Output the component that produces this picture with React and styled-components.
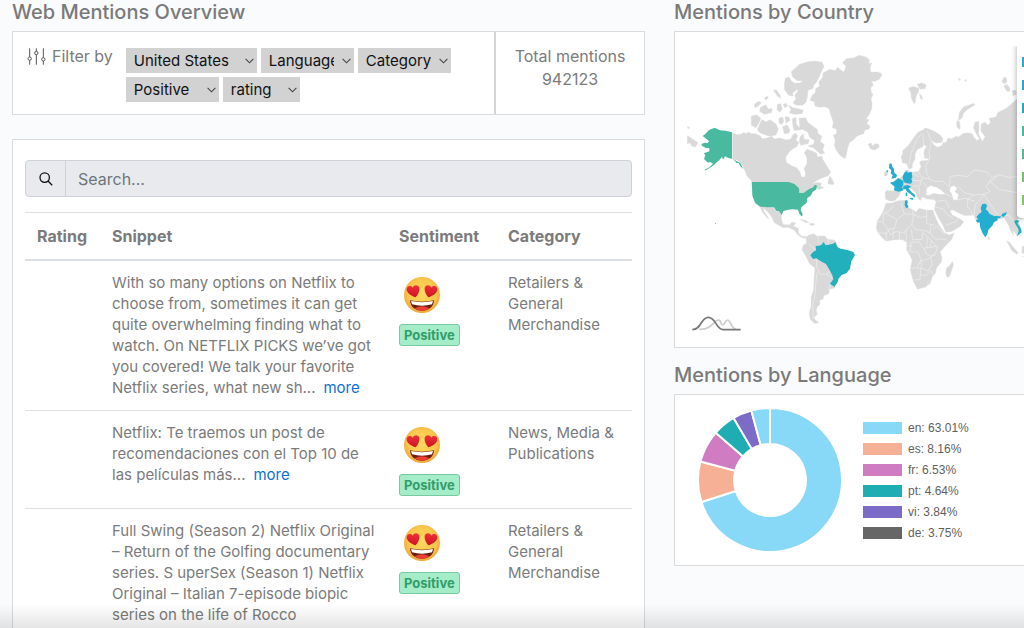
import React from "react";
import styled, { createGlobalStyle } from "styled-components";

const GlobalStyle = createGlobalStyle`
  *, *::before, *::after { box-sizing: border-box; }
  html, body { margin: 0; }
  body {
    height: 100vh;
    overflow: hidden;
    background: #fafbfd;
    color: #7b7b7b;
    font-family: Inter, "Open Sans", sans-serif;
    font-size: 15px;
    line-height: 21px;
  }
`;

const Page = styled.main`
  display: grid;
  grid-template-columns: minmax(0, 633fr) minmax(0, 350fr);
  gap: 29px;
  padding-left: 12px;
`;

const BottomShade = styled.div`
  position: fixed;
  right: 0;
  bottom: 0;
  left: 0;
  height: 24px;
  background: linear-gradient(rgba(0, 0, 0, 0), rgba(0, 0, 0, 0.1));
  pointer-events: none;
`;

const Column = styled.div`
  display: flex;
  flex-direction: column;
`;

const Heading = styled.h2`
  margin: 0;
  padding-top: ${(p) => (p.$spaced ? "15px" : "0")};
  padding-bottom: 7px;
  font-size: 20px;
  font-weight: 500;
  line-height: 24px;
  color: #7a7a7a;
`;

const Card = styled.section`
  background: #fff;
  border: 1px solid #d9dbdc;
`;

const SideCard = styled(Card)`
  position: relative;
  border-right: 0;
`;

const FilterCard = styled(Card)`
  display: flex;
  margin-bottom: 24px;
`;

const FilterArea = styled.div`
  display: flex;
  flex: 1;
  gap: 13px;
  padding: 16px 14px 12px;
`;

const FilterLabel = styled.div`
  display: flex;
  gap: 6px;
  height: 16px;
  align-items: center;
  white-space: nowrap;
  font-size: 16px;
`;

const Filters = styled.div`
  display: flex;
  flex: 1;
  flex-wrap: wrap;
  gap: 4px;
  align-content: flex-start;
  max-width: 340px;
`;

const SelectWrap = styled.span`
  position: relative;
  width: ${(p) => p.$width}px;
  svg {
    position: absolute;
    right: 3px;
    top: 10px;
    pointer-events: none;
  }
`;

const Select = styled.select`
  appearance: none;
  display: block;
  width: 100%;
  height: 25px;
  padding: 0 20px 0 8px;
  border: 0;
  border-radius: 0;
  background: #d2d2d2;
  color: #111;
  font: 400 15px/25px Inter, "Open Sans", sans-serif;
  text-overflow: clip;
`;

const Totals = styled.div`
  width: 150px;
  padding: 13px 8px;
  border-left: 2px solid #d3d5d6;
  text-align: center;
  font-size: 16px;
  line-height: 23px;
`;

const TableCard = styled(Card)`
  padding: 20px 12px 0;
`;

const SearchBar = styled.form`
  display: flex;
  height: 37px;
  margin-bottom: 15px;
  overflow: hidden;
  border: 1px solid #ced2d8;
  border-radius: 4px;
  background: #e8eaed;
`;

const SearchButton = styled.button`
  display: flex;
  align-items: center;
  justify-content: center;
  width: 40px;
  padding: 0;
  border: 0;
  border-right: 1px solid #ced2d8;
  background: transparent;
`;

const SearchInput = styled.input`
  flex: 1;
  min-width: 0;
  padding: 0 12px;
  border: 0;
  outline: 0;
  background: transparent;
  font: 400 16px/24px Inter, "Open Sans", sans-serif;
  &::placeholder { color: #6f757b; opacity: 1; }
`;

const Table = styled.table`
  width: 100%;
  table-layout: fixed;
  border-collapse: separate;
  border-spacing: 0;
`;

const Th = styled.th`
  width: ${(p) => p.$width || "auto"};
  height: 49px;
  padding: 0 12px;
  border-top: 1px solid #dee2e6;
  border-bottom: 2px solid #dcdfe1;
  text-align: left;
  font-size: 16px;
  font-weight: 700;
`;

const Td = styled.td`
  padding: 11px 0 12px 12px;
  border-bottom: 1px solid #dee2e6;
  vertical-align: top;
  white-space: nowrap;
`;

const MoreLink = styled.a`
  margin-left: 8px;
  color: #0d6fd6;
  text-decoration: none;
`;

const Mood = styled.div`
  display: flex;
  flex-direction: column;
  align-items: flex-start;
  gap: 10px;
  padding-top: 4px;
  svg { margin-left: 4px; }
`;

const Badge = styled.span`
  height: 22px;
  padding: 0 4px;
  border: 1px solid #76c9a0;
  border-radius: 3px;
  background: #a5ecc8;
  color: #339d6b;
  font-size: 13px;
  font-weight: 700;
  line-height: 20px;
`;

const MapDrawing = styled.svg`
  display: block;
  width: 100%;
  height: 315px;
`;

const MapLegend = styled.div`
  position: absolute;
  top: 10px;
  right: 0;
  display: flex;
  flex-direction: column;
  gap: 13px;
  width: 7px;
  height: 176px;
  padding: 15px 0 0 5px;
  border-radius: 4px 0 0 4px;
  background: #fff;
  box-shadow: -1px 2px 5px rgba(0, 0, 0, 0.25);
  clip-path: inset(4px 0 -8px -8px);
`;

const LegendTick = styled.i`
  flex: none;
  height: 10px;
  background: ${(p) => p.$color};
`;

const LanguageCard = styled(SideCard)`
  display: flex;
  gap: 20px;
  align-items: center;
  height: 172px;
  padding-left: 23px;
`;

const LanguageList = styled.ul`
  display: flex;
  flex-direction: column;
  gap: 9px;
  margin: 0;
  padding: 0;
  list-style: none;
`;

const LanguageItem = styled.li`
  display: flex;
  gap: 6px;
  align-items: center;
  color: #5f5f5f;
  font: 400 12px/12px "Liberation Sans", Arial, sans-serif;
`;

const Swatch = styled.i`
  width: 39px;
  height: 12px;
  background: ${(p) => p.$color};
`;

const filters = [
  { label: "Country", value: "United States", width: 131 },
  { label: "Language", value: "Language", width: 93 },
  { label: "Category", value: "Category", width: 93 },
  { label: "Sentiment", value: "Positive", width: 93 },
  { label: "Rating", value: "rating", width: 77 },
];

const mentions = [
  {
    snippet: [
      "With so many options on Netflix to",
      "choose from, sometimes it can get",
      "quite overwhelming finding what to",
      "watch. On NETFLIX PICKS we’ve got",
      "you covered! We talk your favorite",
      "Netflix series, what new sh...",
    ],
    more: true,
    category: ["Retailers &", "General", "Merchandise"],
  },
  {
    snippet: [
      "Netflix: Te traemos un post de",
      "recomendaciones con el Top 10 de",
      "las películas más...",
    ],
    more: true,
    category: ["News, Media &", "Publications"],
  },
  {
    snippet: [
      "Full Swing (Season 2) Netflix Original",
      "– Return of the Golfing documentary",
      "series. S uperSex (Season 1) Netflix",
      "Original – Italian 7-episode biopic",
      "series on the life of Rocco",
    ],
    more: false,
    category: ["Retailers &", "General", "Merchandise"],
  },
];

const languages = [
  { code: "en", share: 63.01, color: "#88d8f8", slice: "#88d8f8" },
  { code: "es", share: 8.16, color: "#f5b095", slice: "#f5b095" },
  { code: "fr", share: 6.53, color: "#cf7cc3", slice: "#cf7cc3" },
  { code: "pt", share: 4.64, color: "#1dadb3", slice: "#1dadb3" },
  { code: "vi", share: 3.84, color: "#7c6cc8", slice: "#7c6cc8" },
  { code: "de", share: 3.75, color: "#666666", slice: "#88d8f8" },
];

const tickColors = ["#29a9d4", "#25abca", "#22abb8", "#49b9a0", "#57b994", "#76c074", "#84c667"];

function Lines({ items }) {
  return items.map((line, i) => (
    <React.Fragment key={i}>
      {i > 0 && <br />}
      {line}
    </React.Fragment>
  ));
}

function Chevron() {
  return (
    <svg width="9" height="6" viewBox="0 0 9 6" fill="none" stroke="#444" strokeWidth="1.1" aria-hidden="true">
      <path d="M.6.8 4.5 4.8 8.4.8" />
    </svg>
  );
}

function SlidersIcon() {
  return (
    <svg width="19" height="17" viewBox="0 0 57 51" fill="none" stroke="#555" strokeWidth="3" aria-hidden="true">
      <path d="M8 1V27M8 37V50M28 1V10M28 20V50M49 1V29M49 39V50" />
      <circle cx="8" cy="32" r="5" />
      <circle cx="28" cy="15" r="5" />
      <circle cx="49" cy="34" r="5" />
    </svg>
  );
}

function SearchIcon() {
  return (
    <svg width="14" height="14" viewBox="0 0 14 14" fill="none" stroke="#111" strokeWidth="1.3" aria-hidden="true">
      <circle cx="5.7" cy="5.6" r="4.7" />
      <path d="m9 9 4.2 4.2" />
    </svg>
  );
}

function HeartEyes() {
  return (
    <svg width="38" height="38" viewBox="0 0 114 114" role="img" aria-label="Heart eyes">
      <defs>
        <radialGradient id="face" cx="50%" cy="45%" r="55%">
          <stop offset="0" stopColor="#ffd95e" />
          <stop offset=".7" stopColor="#fbc84c" />
          <stop offset="1" stopColor="#efa53a" />
        </radialGradient>
        <linearGradient id="heart" x1="0" y1="0" x2="0" y2="1">
          <stop offset="0" stopColor="#f0303a" />
          <stop offset="1" stopColor="#cc1424" />
        </linearGradient>
      </defs>
      <circle cx="57" cy="57" r="54" fill="url(#face)" />
      <path d="M38 64C23 59 10 50 11 39c1-9 12-12 18-4 5-10 18-9 20 1 1 10-4 20-11 28Z" fill="url(#heart)" />
      <path d="M76 64c15-5 28-14 27-25-1-9-12-12-18-4-5-10-18-9-20 1-1 10 4 20 11 28Z" fill="url(#heart)" />
      <path d="M21 73q36 8 72 0c-1 20-16 31-36 31S22 93 21 73Z" fill="#6b2012" />
      <path d="M24 75q33 7 66 0l-3 10q-30 8-60 0Z" fill="#fff" />
      <path d="M35 97q22-13 44 0-9 7-22 7t-22-7Z" fill="#ee3d35" />
    </svg>
  );
}

function Donut() {
  const total = languages.reduce((sum, l) => sum + l.share, 0);
  const point = (r, a) => `${75 + r * Math.sin(a)} ${75 - r * Math.cos(a)}`;
  let angle = 0;
  return (
    <svg width="145" height="150" viewBox="3 0 145 150" role="img" aria-label="Mentions by language">
      {languages.map((l) => {
        const start = angle;
        angle += (l.share / total) * Math.PI * 2;
        const large = angle - start > Math.PI ? 1 : 0;
        const d = `M${point(72, start)} A72 72 0 ${large} 1 ${point(72, angle)} L${point(36, angle)} A36 36 0 ${large} 0 ${point(36, start)}Z`;
        return <path key={l.code} d={d} fill={l.slice} stroke="#fff" strokeWidth="2" />;
      })}
    </svg>
  );
}

function WorldMap() {
  return (
    <MapDrawing viewBox="-15 -24 1047 945" preserveAspectRatio="xMinYMin meet" role="img" aria-label="World map of mentions">
      <g fill="#d9d9d9" stroke="#d9d9d9" strokeLinejoin="round">
        {/* North America */}
        <path d="M158 279 172 284 185 282 192 277 198 281 206 276 214 281 225 281 240 287 247 296 262 294 276 289 283 297 300 294 318 300 333 297 338 285 347 279 353 288 348 300 357 308 350 320 338 326 326 338 317 352 319 367 336 378 350 383 360 396 364 410 374 412 377 400 372 386 381 371 381 354 373 338 381 328 396 333 410 340 413 351 425 348 430 361 440 377 452 397 444 408 425 414 408 423 396 433 411 427 424 430 421 440 432 442 417 449 411 444 405 438 385 448 375 455 359 460 356 445 345 432 325 427 216 426 210 417 200 407 197 396 188 378 177 362 158 356Z" />
        <path d="M444 424 449 409 456 417 462 431 457 434 444 431Z" />
        <path d="M22 287 41 299 54 308 46 321 37 319 29 308 22 312Z" />
        <path d="M22 260 30 263 24 266Z" />
        {/* Arctic islands */}
        <path d="M334 95 351 80 358 73 385 65 404 63 427 67 432 80 426 91 415 116 408 129 401 135 400 145 384 151 382 171 378 187 368 196 348 195 339 188 348 176 344 166 354 152 346 143 343 130 360 129 369 122 352 122 338 111Z" />
        <path d="M316 114 328 112 335 124 343 129 349 151 338 159 339 168 326 166 314 150 313 133Z" />
        <path d="M280 150 290 151 300 166 302 175 292 168Z" />
        <path d="M253 175 261 169 266 173 257 180Z" />
        <path d="M223 193 236 184 244 188 234 199 224 203Z" />
        <path d="M242 202 258 195 264 207 277 206 274 218 253 223 239 214Z" />
        <path d="M292 193 302 191 307 207 300 217 291 209Z" />
        <path d="M310 193 319 190 322 199 314 203Z" />
        <path d="M326 195 338 203 358 207 370 211 366 221 344 223 328 218 333 209Z" />
        <path d="M214 228 230 225 243 235 235 252 228 263 214 256Z" />
        <path d="M238 255 246 238 257 246 270 239 288 252 295 267 288 285 268 289 241 279 232 270Z" />
        <path d="M297 235 307 231 312 243 305 254 297 248Z" />
        <path d="M315 230 326 231 330 241 318 250Z" />
        <path d="M308 260 321 255 330 269 327 279 313 281Z" />
        <path d="M337 236 348 232 349 253 360 264 357 235 377 233 384 248 401 260 413 269 413 279 426 290 420 304 433 314 428 329 434 340 422 343 400 323 383 318 401 313 404 302 389 292 383 276 367 268 344 272 339 260Z" />
        <path d="M360 291 370 281 372 298 388 299 384 311 362 316 358 304Z" />
        {/* Greenland and Iceland */}
        <path d="M397 165 406 158 407 146 419 138 416 126 428 112 429 99 450 88 466 92 472 82 485 92 492 96 498 78 487 68 500 56 523 53 537 46 558 51 568 59 566 71 575 69 570 84 573 97 588 96 603 99 605 106 598 118 584 124 574 123 580 136 572 143 574 157 579 163 573 177 576 190 575 207 568 223 558 237 567 239 560 251 570 259 566 268 555 269 551 281 531 288 521 299 509 307 503 323 500 340 495 356 481 347 470 332 463 316 466 301 460 286 470 281 470 267 457 263 460 247 454 229 447 206 435 200 417 202 405 198 403 185 390 181Z" />
        <path d="M564 313 573 309 577 317 586 311 596 312 598 321 585 330 572 327Z" />
      </g>

      <g transform="translate(0 420)" fill="#d9d9d9" stroke="#f0f0f0" strokeWidth="1">
        {/* Central and South America */}
        <path d="M240 80 280 82 290 95 298 94 305 106 305 120 310 133 328 134 336 126 348 128 341 139 355 144 356 160 367 169 380 169 378 176 367 174 354 165 342 151 326 143 309 143 283 129 275 112 264 97 250 84 252 93 267 116 261 114 246 95Z" />
        <path d="M358 117 376 121 389 129 378 128 363 121ZM390 130 400 130 406 133 397 137 388 134Z" />
        <path d="M378 172 387 164 402 161 411 168 434 167 443 177 464 180 470 190 478 220 475 270 464 325 449 328 447 341 432 347 430 357 419 362 421 372 412 381 409 390 412 403 403 412 405 418 417 428 404 431 390 418 387 400 393 378 393 352 400 330 402 294 404 263 388 251 377 229 366 210 369 196 379 190Z" />
        <path d="M385 192 407 210 391 227 404 239M412 165 417 190M445 177 445 193M410 238 410 263 420 282 439 283 451 272M411 278 408 304 405 344 398 377 400 417M440 281 458 295M450 312 447 330" fill="none" strokeWidth="2" />
      </g>

      {/* Europe and Asia */}
      <g transform="translate(510 0)" fill="#d9d9d9" stroke="#f0f0f0" strokeWidth="1">
        <path d="M153 350 158 341 157 332 175 316 190 294 204 276 219 269 226 263 241 268 256 275 272 286 280 297 275 308 258 310 246 303 252 315 262 321 274 317 281 305 287 308 294 293 304 296 319 288 325 291 340 280 356 278 367 281 372 291 380 301 388 296 378 281 370 264 374 247 386 243 388 263 386 282 397 303 405 290 392 273 393 252 406 246 413 255 421 248 417 235 438 230 444 217 468 205 486 190 500 177 540 170 540 533 515 536 501 536 510 557 515 573 502 588 491 573 491 587 480 569 476 557 463 535 445 538 424 555 415 569 406 590 395 561 388 545 376 538 371 526 344 527 327 520 308 510 301 512 307 525 328 535 342 545 332 559 304 575 287 577 278 556 264 532 253 509 254 500 258 485 252 479 230 478 218 470 211 482 202 473 198 461 185 446 174 444 184 454 195 464 193 474 180 461 167 450 154 453 147 468 135 482 120 484 106 478 105 457 110 451 132 452 135 438 120 430 131 426 144 420 155 409 164 402 165 391 173 389 182 397 206 394 213 379 208 370 212 362 232 361 237 357 222 355 220 333 213 323 201 330 195 345 196 356 188 371 187 384 177 388 169 371 157 369Z" />
        <path d="M103 397 111 391 115 400 109 409 102 407Z" />
        <path d="M175 144 189 139 207 144 207 153 199 168 196 188 192 191 184 176 182 158ZM201 133 215 128 229 134 226 146 210 148ZM208 159 216 169 218 180 211 176Z" />
        <path d="M324 242 328 216 341 200 371 190 376 194 354 208 341 219 336 235ZM319 244 327 241 331 254 330 270 320 261Z" />
        <path d="M455 125 461 112 469 112 472 126 464 132ZM461 138 471 132 480 144 480 155 470 154ZM486 151 497 150 500 163 489 168ZM324 115 333 117 328 123ZM342 121 349 118 350 125Z" />
        <path d="M413 590 419 592 419 600 414 600ZM469 602 478 606 491 622 505 639 500 643 485 632ZM516 620 527 615 533 646 515 639ZM512 649 535 647 535 651Z" />
        {/* inland seas */}
        <path d="M228 465 231 444 242 437 251 440 259 442 273 450 286 462 272 463 249 460 238 466ZM302 441 313 437 321 445 314 455 325 463 322 480 310 479 306 462 299 452Z" fill="#fff" />
        <path d="M214 325 221 315 229 319 220 337 223 353 213 352 209 337Z" fill="#fff" />
        <path d="M177 374 184 338 198 303 214 281M218 281 222 319M232 273 244 304 237 335 239 356 227 379 230 399 241 420 255 424 280 424 298 441M205 395 217 414 209 438 190 439M187 399 206 410M217 414 240 417M184 421 215 423M298 441 301 409 325 406 352 410 373 390 407 395 427 412 447 404 476 412 501 410M424 416 408 440 421 454 401 463 370 465 344 458 324 440M402 464 416 485 443 525M404 464 376 494 372 525M371 466 353 477 353 500 371 526M321 480 345 475 375 484M262 484 287 480 298 504M255 500 279 507 288 519 309 536M288 555 319 545 325 533M445 405 421 426 448 448 504 459M445 534 459 525 477 527 491 543 504 548M208 443 209 463M221 426 229 443M281 459 306 471" fill="none" strokeWidth="2" />
      </g>

      {/* Africa */}
      <g transform="translate(510 420)" fill="#d9d9d9" stroke="#f0f0f0" strokeWidth="1">
        <path d="M108 69 123 69 143 62 166 60 176 66 171 80 187 88 198 95 207 85 231 90 249 90 255 107 267 134 284 158 298 164 313 158 306 178 284 200 271 216 276 231 275 246 260 263 257 280 247 291 243 305 227 322 202 328 190 305 180 268 186 240 176 221 169 208 170 187 157 179 131 180 108 184 97 174 84 158 78 145 82 122 95 102 103 83Z" />
        <path d="M289 264 300 255 307 244 311 255 299 289 292 293 287 283Z" />
        <path d="M107 99 140 119 163 102 153 70M79 126 99 125 101 99 120 91 132 76M99 127 117 153 105 161 84 157M163 102 190 103 187 88M191 103 211 113 230 108 230 90M230 108 230 130 256 137M191 105 185 135 169 148 164 158 138 155 121 164 113 149 135 143 140 119M187 134 197 149 223 151 240 159 243 136M168 149 169 182M184 149 188 179 216 178 219 154M219 158 244 181 240 202 219 205 208 186 183 187 181 212 173 215M240 159 255 177 290 178M244 181 262 203 255 224 241 228 227 220 223 205M181 216 204 216 213 239 201 263 181 265M212 242 231 238 255 224M213 242 214 264 234 273 247 255 242 231M202 265 212 264 210 299 193 300M211 285 228 286 243 273 253 292M107 155 110 182M130 145 129 176M149 156 148 179M250 148 260 139 285 163M232 173 230 202M171 198 188 198M239 202 263 198" fill="none" strokeWidth="2" />
        <path d="M232 306 239 302 242 309 235 315Z" />
      </g>

      {/* Countries with mentions */}
      <g fill="#49b99f">
        <path d="M68 288 76 282 87 270 104 263 120 271 137 272 156 277 156 356 145 354 135 349 129 359 126 351 118 360 108 369 99 377 87 385 75 392 74 389 88 382 99 371 90 366 84 368 72 357 76 345 71 340 88 334 88 325 77 324 64 316 66 311 74 308 83 310 87 303Z" />
        <path d="M156 355 169 363 181 369 190 388 181 379 176 369 169 369 165 363Z" />
        <path transform="translate(0 420)" d="M215 6 326 6 344 12 357 25 358 39 371 38 387 27 399 22 405 14 411 17 409 28 398 36 392 47 382 54 380 68 364 82 362 90 369 105 364 109 357 99 354 89 338 88 325 89 310 93 305 105 297 94 289 93 282 82 261 82 240 80 225 68 217 47 216 22Z" />
      </g>
      <g fill="#22b0bd" transform="translate(0 420)">
        <path d="M391 226 399 216 408 211 407 197 414 198 424 195 431 186 437 196 457 192 466 187 472 201 482 206 502 210 520 216 525 225 514 244 510 266 499 280 485 285 475 297 473 307 463 320 450 311 460 298 457 286 447 267 438 252 425 245 409 235 399 237Z" />
        <path d="M105 130h3v2h-3Z" fill="#8a9a9b" />
      </g>
      <g transform="translate(510 0)" fill="#22add1">
        <path d="M118 371 124 370 127 380 132 386 132 397 141 406 138 413 124 416 128 406 122 400 124 391 117 384ZM110 391 115 391 114 396 109 395Z" />
        <path d="M162 399 170 394 174 398 185 395 187 411 184 417 187 424 183 431 170 430 161 426 158 411Z" />
        <path d="M120 428 131 425 145 414 160 423 160 435 156 441 160 450 154 453 145 455 132 451 134 440Z" />
        <path d="M160 438 173 435 184 440 175 445 184 456 195 465 194 473 189 468 181 461 171 455 167 447 159 446ZM179 474 190 473 188 480 181 477ZM167 459 171 457 172 467 167 469Z" />
        <path transform="translate(0 420)" d="M165 62 172 60 173 67 171 73 176 79 171 85 168 83 164 76Z" />
        <path transform="translate(0 420)" d="M377 120 385 118 379 111 387 102 395 96 392 84 397 72 408 71 411 79 407 88 414 94 419 102 434 109 443 107 443 121 432 126 427 137 415 149 412 163 406 172 399 162 391 144 389 127 382 128ZM442 108 453 109 457 101 471 96 467 105 460 111 454 108 450 115 444 114Z" />
        <path transform="translate(0 420)" d="M492 122 501 120 508 123 502 130 512 144 515 157 501 169 506 154 505 146 496 132Z" fill="#22b0bd" />
      </g>

      {/* Chart library mark */}
      <g transform="translate(0 420)" fill="none" strokeWidth="5">
        <path stroke="#ccc" d="M58 448C94 451 102 420 115 420 124 420 121 435 128 435 135 435 136 419 143 420 151 420 154 446 168 448" />
        <path stroke="#777" d="M37 449C65 449 62 412 85 412 109 412 106 448 130 449L182 449" />
      </g>
    </MapDrawing>
  );
}

export default function App() {
  return (
    <>
      <GlobalStyle />
      <Page>
        <Column>
          <Heading>Web Mentions Overview</Heading>
          <FilterCard>
            <FilterArea>
              <FilterLabel>
                <SlidersIcon />
                Filter by
              </FilterLabel>
              <Filters>
                {filters.map((f) => (
                  <SelectWrap key={f.label} $width={f.width}>
                    <Select aria-label={f.label} defaultValue={f.value}>
                      <option>{f.value}</option>
                    </Select>
                    <Chevron />
                  </SelectWrap>
                ))}
              </Filters>
            </FilterArea>
            <Totals>
              Total mentions
              <br />
              942123
            </Totals>
          </FilterCard>

          <TableCard>
            <SearchBar role="search">
              <SearchButton type="button" aria-label="Search">
                <SearchIcon />
              </SearchButton>
              <SearchInput type="text" aria-label="Search mentions" placeholder="Search..." />
            </SearchBar>
            <Table>
              <thead>
                <tr>
                  <Th $width="75px">Rating</Th>
                  <Th>Snippet</Th>
                  <Th $width="109px">Sentiment</Th>
                  <Th $width="136px">Category</Th>
                </tr>
              </thead>
              <tbody>
                {mentions.map((m) => (
                  <tr key={m.snippet[0]}>
                    <Td />
                    <Td>
                      <Lines items={m.snippet} />
                      {m.more && <MoreLink href="#more">more</MoreLink>}
                    </Td>
                    <Td>
                      <Mood>
                        <HeartEyes />
                        <Badge>Positive</Badge>
                      </Mood>
                    </Td>
                    <Td>
                      <Lines items={m.category} />
                    </Td>
                  </tr>
                ))}
              </tbody>
            </Table>
          </TableCard>
        </Column>

        <Column>
          <Heading>Mentions by Country</Heading>
          <SideCard>
            <WorldMap />
            <MapLegend>
              {tickColors.map((c) => (
                <LegendTick key={c} $color={c} />
              ))}
            </MapLegend>
          </SideCard>
          <Heading $spaced>Mentions by Language</Heading>
          <LanguageCard>
            <Donut />
            <LanguageList>
              {languages.map((l) => (
                <LanguageItem key={l.code}>
                  <Swatch $color={l.color} />
                  {l.code}: {l.share}%
                </LanguageItem>
              ))}
            </LanguageList>
          </LanguageCard>
        </Column>
      </Page>
      <BottomShade />
    </>
  );
}
